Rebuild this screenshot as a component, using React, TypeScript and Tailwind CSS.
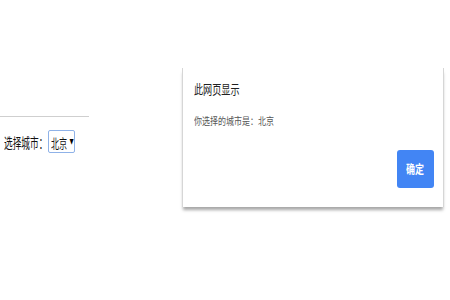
import React from "react";

const cjk = { fontFamily: '"Noto Sans CJK SC", "Liberation Sans", sans-serif' };

export default function App() {
  return (
    <div className="relative w-[450px] h-[300px] bg-white overflow-hidden" style={cjk}>
      {/* page content */}
      <div className="pt-[116px]">
        <div className="w-[89px] h-px bg-[#cfcfcf]" />
        <div className="flex items-center mt-[12px] pl-[4px] h-[24px]">
          <div className="w-[44px] whitespace-nowrap">
            <span className="inline-block origin-left scale-x-[0.62] text-[14px] leading-[16px] text-[#111]">选择城市：</span>
          </div>
          <div className="w-[27px] h-[23px] border border-[#8fb2e8] rounded-[2px] flex items-center pl-[2px] bg-white">
            <span className="w-[17px] whitespace-nowrap">
              <span className="inline-block origin-left scale-x-[0.62] text-[13px] leading-[14px] text-[#111]">北京</span>
            </span>
            <span className="text-[7px] leading-none text-black scale-x-[0.6] inline-block">▼</span>
          </div>
        </div>
      </div>

      {/* alert dialog */}
      <div className="absolute left-[182px] top-[68px] w-[262px] h-[139px] bg-white border-x border-[#d6d6d6] shadow-[0_4px_3px_-1px_rgba(0,0,0,0.35)] flex flex-col pl-[11px] pr-[9px]">
        <div className="mt-[7px] h-[16px] whitespace-nowrap">
          <span className="inline-block origin-left scale-x-[0.7] text-[13px] leading-[16px] text-[#202020]">此网页显示</span>
        </div>
        <div className="mt-[15px] h-[14px] whitespace-nowrap">
          <span className="inline-block origin-left scale-x-[0.8] text-[10px] leading-[14px] text-[#555]">你选择的城市是：北京</span>
        </div>
        <div className="flex justify-end mt-[30px]">
          <div className="w-[37px] h-[38px] rounded-[3px] bg-[#4285f4] flex items-center justify-center">
            <span className="inline-block scale-x-[0.75] text-[12px] font-bold leading-none text-white">确定</span>
          </div>
        </div>
      </div>
    </div>
  );
}
